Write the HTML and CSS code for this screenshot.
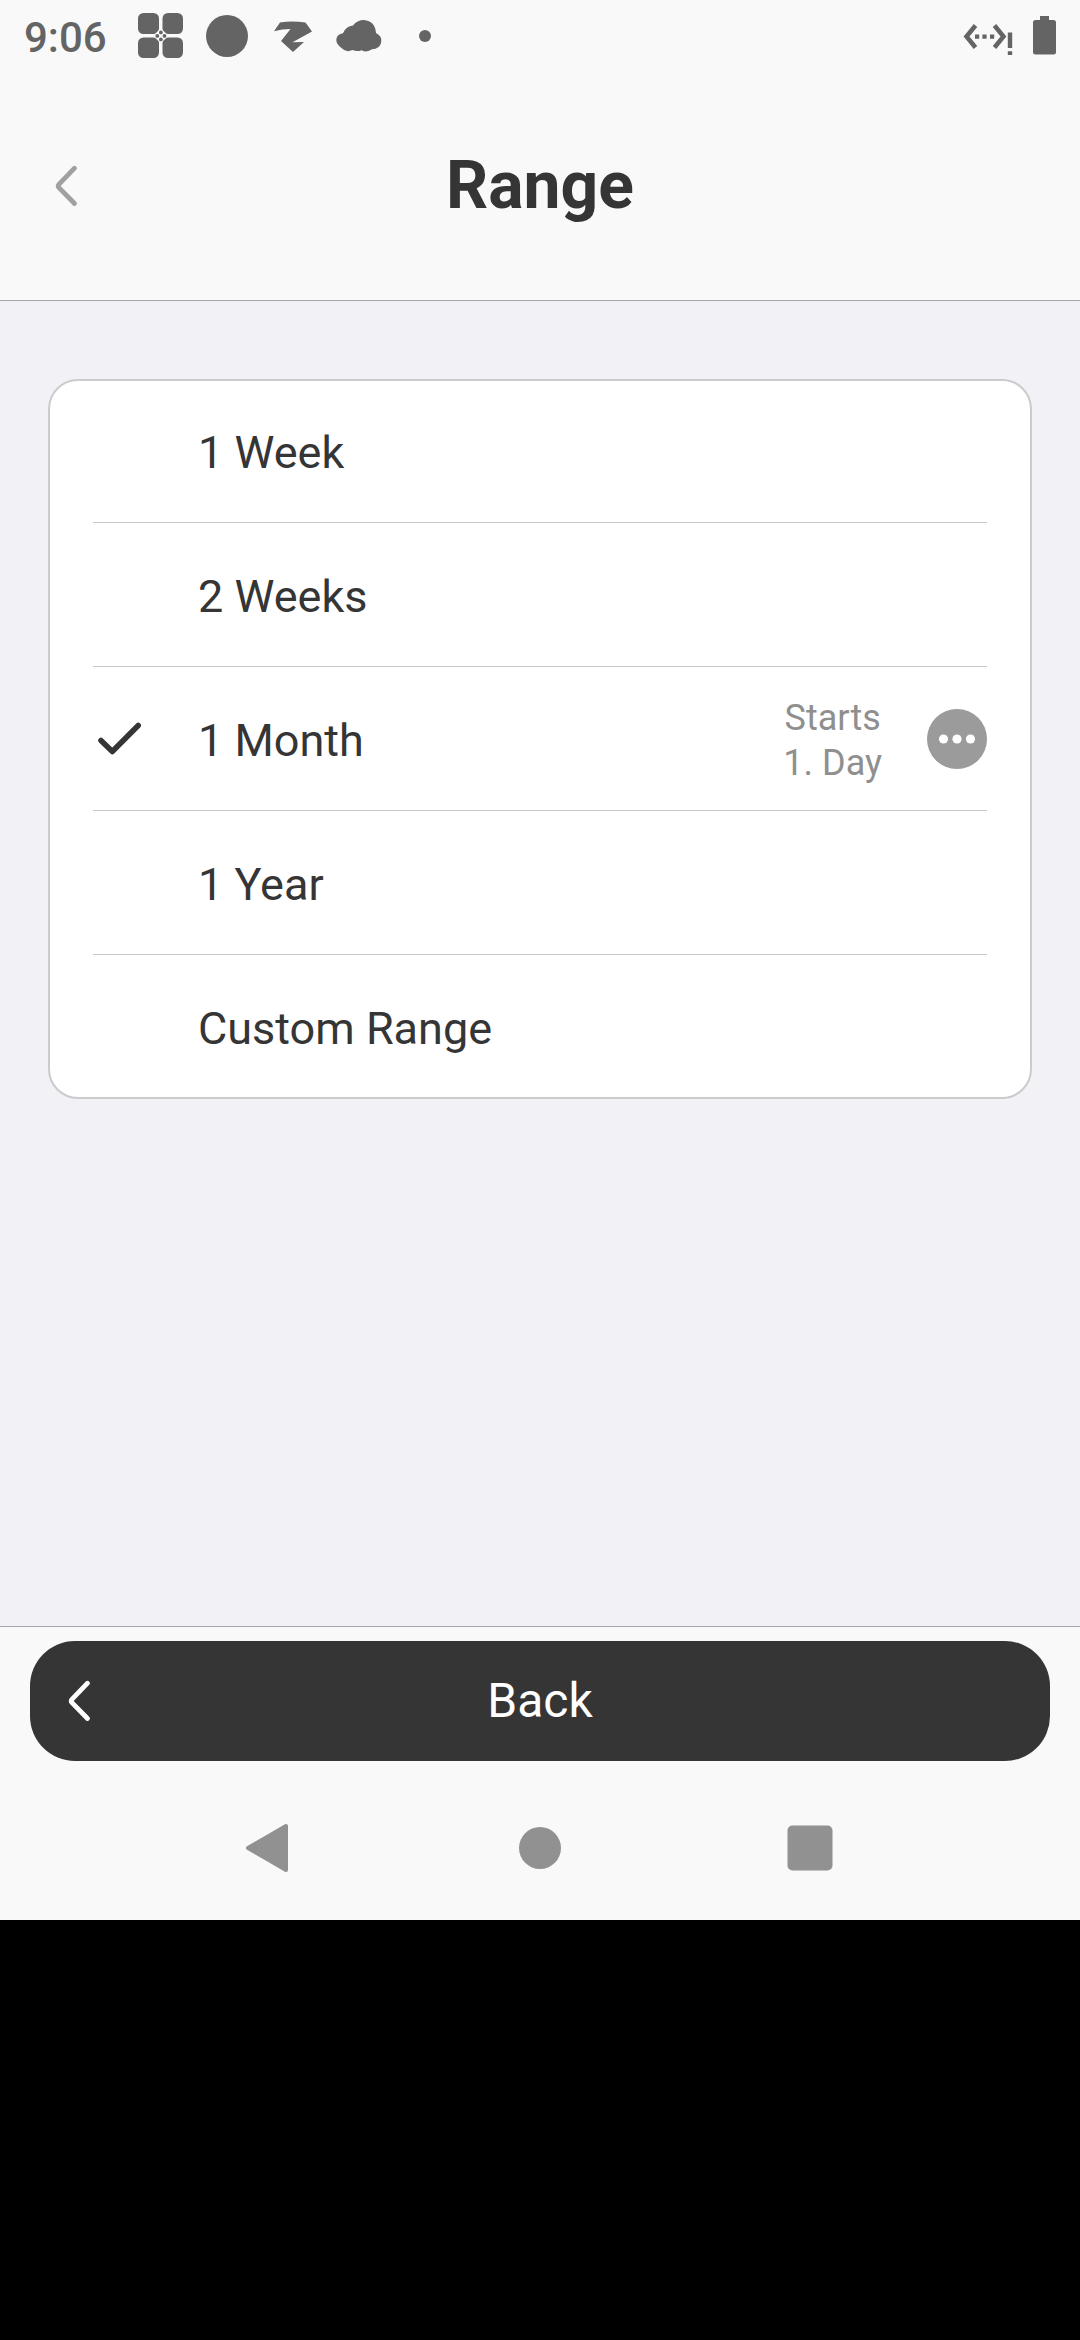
FILE: index.html
```html
<!DOCTYPE html>
<html lang="en">
<head>
<meta charset="utf-8">
<title>Range</title>
<link rel="stylesheet" href="styles.css">
</head>
<body>
<div class="status">
  <span class="clock">9:06</span>
  <svg class="notifications" width="300" height="72" viewBox="136 0 300 72">
    <rect x="138" y="13" width="21" height="21" rx="5.5"/>
    <rect x="162.500" y="13" width="20.500" height="21" rx="5.5"/>
    <rect x="138" y="37.500" width="21" height="20.500" rx="5.5"/>
    <rect x="162.500" y="37.500" width="20.500" height="20.500" rx="5.5"/>
    <path class="gap" d="M160.800 28.300l7.700 7.500-7.700 7.500-7.700-7.500z"/>
    <circle cx="160.900" cy="32.400" r="1.900"/><circle cx="164.500" cy="35.900" r="1.900"/>
    <circle cx="160.900" cy="39.400" r="1.900"/><circle cx="157.300" cy="35.900" r="1.900"/>
    <circle cx="227" cy="36" r="21"/>
    <path d="M280 22.500Q292 20.500 305.500 22.500L312 31.500L292.500 42.300L304 42L293 52L281 41L290.500 29Q282 29 274 31.300Z"/>
    <path d="M343 33.200Q346 26 353 25.500Q357 20 364 20Q375 21 376 33Q382 36 381.300 42Q380 49 372 49.300Q367 53 361.500 50.200Q357 52 352.500 50Q346 53 341.500 48Q336 44 336.300 39.500Q337 34 343 33.200Z"/>
    <circle cx="425" cy="36" r="6"/>
  </svg>
  <svg class="system" width="100" height="72" viewBox="960 0 100 72">
    <path class="line" d="M975.500 25.500L966.500 36.500L975.500 47.500M994.500 25.500L1003.500 36.500L994.500 47.500"/>
    <path d="M975 34.500h4.200v4.200h-4.200zM982.400 34.500h4.200v4.200h-4.200zM990 34.500h4.200v4.200h-4.200zM1007.800 32.500h4.400v15.500h-4.400zM1007.800 51.200h4.400v3.800h-4.400z"/>
    <path d="M1040 16h9v4h4.500a2.500 2.500 0 0 1 2.500 2.500v29.500a2.500 2.500 0 0 1-2.500 2.500h-18a2.500 2.500 0 0 1-2.500-2.500v-29.500a2.500 2.500 0 0 1 2.500-2.500h4.500z"/>
  </svg>
</div>
<header class="header">
  <svg class="chevron" width="24" height="44" viewBox="0 0 24 44"><path d="M20.500 4.200L4.700 20.600a2 2 0 0 0 0 2.800L20.500 39.500"/></svg>
  <h1 class="title">Range</h1>
</header>
<main class="content">
  <ul class="card">
    <li class="row"><span class="label">1 Week</span></li>
    <li class="row"><span class="label">2 Weeks</span></li>
    <li class="row">
      <svg class="check" width="50" height="36" viewBox="95 719 50 36"><path d="M101 740.500L112.300 751.500L138.200 725.500"/></svg>
      <span class="label">1 Month</span>
      <span class="detail">Starts<br>1. Day</span>
      <svg class="more" width="60" height="60" viewBox="0 0 60 60"><circle cx="30" cy="30" r="30"/><g fill="#fff"><circle cx="16.500" cy="30" r="4.600"/><circle cx="30" cy="30" r="4.600"/><circle cx="43.500" cy="30" r="4.600"/></g></svg>
    </li>
    <li class="row"><span class="label">1 Year</span></li>
    <li class="row"><span class="label">Custom Range</span></li>
  </ul>
</main>
<footer class="footer">
  <div class="back">
    <svg class="chevron light" width="24" height="44" viewBox="0 0 24 44"><path d="M20.500 4.200L4.700 20.600a2 2 0 0 0 0 2.800L20.500 39.500"/></svg>
    <span class="back-label">Back</span>
  </div>
  <nav class="nav">
    <svg width="60" height="60" viewBox="0 0 60 60"><path stroke-width="4" stroke-linejoin="round" d="M8 30L46 8V52Z"/></svg>
    <svg width="60" height="60" viewBox="0 0 60 60"><circle stroke="none" cx="30" cy="30" r="21"/></svg>
    <svg width="60" height="60" viewBox="0 0 60 60"><rect stroke="none" x="7.500" y="7.500" width="45" height="45" rx="5"/></svg>
  </nav>
</footer>
</body>
</html>
```
FILE: styles.css
```css
* { box-sizing: border-box; }
body {
  margin: 0;
  width: 1080px;
  height: 2340px;
  overflow: hidden;
  background: #000;
  color: #353535;
  font-family: Roboto, sans-serif;
  display: flex;
  flex-direction: column;
}
svg { display: block; flex: none; }
.status {
  height: 72px;
  background: #f9f9f9;
  display: flex;
  align-items: center;
  padding: 0 20px 0 24px;
  color: #646464;
  fill: #646464;
}
.clock { width: 112px; height: 72px; padding-top: 2px; font-size: 42px; font-weight: 500; line-height: 72px; }
.gap { fill: #f9f9f9; }
.system { margin-left: auto; }
.line { fill: none; stroke: #646464; stroke-width: 4.5; }
.header {
  height: 229px;
  background: #f9f9f9;
  border-bottom: 1px solid #a7a7ab;
  display: grid;
  grid-template-columns: 1fr auto 1fr;
  align-items: start;
  padding: 75px 54px 0;
}
.header .chevron { margin-top: 17px; }
.title { margin: 0; font-size: 66px; line-height: 78px; font-weight: 700; }
.chevron { fill: none; stroke: #a0a0a0; stroke-width: 4.8; stroke-linecap: round; }
.light { stroke: #fff; }
.content { height: 1325px; background: #f2f1f6; padding: 78px 48px 0; }
.card {
  margin: 0;
  padding: 0 43px;
  height: 720px;
  list-style: none;
  background: #fff;
  border: 2px solid #cbcbce;
  border-radius: 30px;
  display: grid;
  grid-template-rows: 142px repeat(3, 144px) 1fr;
}
.row {
  display: grid;
  grid-template-columns: 105px 1fr auto auto;
  align-items: center;
  border-bottom: 1px solid #c6c6c8;
}
.row:first-child { padding-bottom: 2px; }
.row:last-child { border-bottom: 0; }
.label { grid-column: 2; font-size: 45px; line-height: 54px; padding-top: 5px; }
.check {
  grid-column: 1;
  grid-row: 1;
  margin: 0 0 3px 2px;
  fill: none;
  stroke: #353535;
  stroke-width: 5.5;
  stroke-linecap: round;
  stroke-linejoin: round;
}
.detail { font-size: 36px; line-height: 45px; text-align: center; color: #8f8f8f; padding-top: 5px; margin-right: 45px; }
.more { fill: #9b9b9b; margin-top: 1px; }
.footer { height: 294px; background: #f9f9f9; border-top: 1px solid #a7a7ab; padding: 14px 30px 0; }
.back {
  height: 120px;
  border-radius: 45px;
  background: #353535;
  color: #fff;
  display: grid;
  grid-template-columns: 1fr auto 1fr;
  align-items: center;
  padding: 0 37px;
}
.back-label { font-size: 48px; line-height: 58px; }
.nav {
  height: 60px;
  margin: 57px 210px 0;
  display: flex;
  justify-content: space-between;
  fill: #919191;
  stroke: #919191;
}
```
